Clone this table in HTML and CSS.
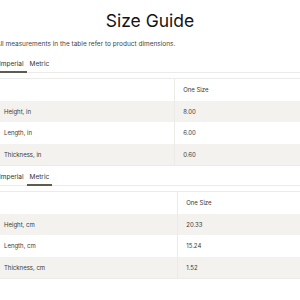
FILE: index.html
```html
<!DOCTYPE html>
<html lang="en">
<head>
<meta charset="utf-8">
<title>Size Guide</title>
<link rel="stylesheet" href="styles.css">
</head>
<body>
<div class="guide">
  <h1 class="title">Size Guide</h1>
  <p class="intro">All measurements in the table refer to product dimensions.</p>

  <section class="unit">
    <div class="tabs">
      <span class="tab is-active">Imperial</span>
      <span class="tab">Metric</span>
    </div>
    <table class="sizes">
      <thead>
        <tr><th class="label"></th><th class="value">One Size</th></tr>
      </thead>
      <tbody>
        <tr><td class="label">Height, in</td><td class="value">8.00</td></tr>
        <tr><td class="label">Length, in</td><td class="value">6.00</td></tr>
        <tr><td class="label">Thickness, in</td><td class="value">0.60</td></tr>
      </tbody>
    </table>
  </section>

  <section class="unit">
    <div class="tabs">
      <span class="tab">Imperial</span>
      <span class="tab is-active">Metric</span>
    </div>
    <table class="sizes">
      <thead>
        <tr><th class="label"></th><th class="value">One Size</th></tr>
      </thead>
      <tbody>
        <tr><td class="label">Height, cm</td><td class="value">20.33</td></tr>
        <tr><td class="label">Length, cm</td><td class="value">15.24</td></tr>
        <tr><td class="label">Thickness, cm</td><td class="value">1.52</td></tr>
      </tbody>
    </table>
  </section>
</div>
</body>
</html>
```

FILE: styles.css
```css
html, body {
  margin: 0;
  padding: 0;
  background: #ffffff;
}

body {
  font-family: "Inter", "Liberation Sans", sans-serif;
  color: #333330;
  overflow: hidden;
}

.guide {
  width: 308px;
  margin-left: -4px;
}

.title {
  margin: 0;
  padding-top: 10px;
  font-size: 17.5px;
  font-weight: 400;
  line-height: 22px;
  text-align: center;
  color: #141414;
}

.intro {
  margin: 7px 0 0;
  font-size: 6.5px;
  line-height: 10px;
  color: #444440;
}

.unit {
  display: flex;
  flex-direction: column;
}

.tabs {
  display: flex;
  margin-top: 10px;
  border-bottom: 1px solid #ecebe7;
}

.tab {
  font-size: 6.5px;
  line-height: 8px;
  padding: 1px 3px 3px;
  border-bottom: 2px solid transparent;
  margin-bottom: -1px;
  color: #333330;
}

.tab.is-active {
  border-bottom-color: #5f5c4c;
}

.sizes {
  width: 100%;
  margin-top: 5px;
  border-collapse: collapse;
  border-top: 1px solid #ecebe7;
  border-bottom: 1px solid #ecebe7;
  font-size: 6px;
}

.sizes th,
.sizes td {
  padding: 0 8px;
  height: 21.5px;
  text-align: left;
  font-weight: 400;
  color: #3a3a36;
}

.sizes .label {
  width: 58%;
  border-right: 1px solid #ecebe7;
}

.sizes tbody tr:nth-child(odd) {
  background: #f3f2ee;
}

.unit + .unit .tabs {
  margin-top: 6px;
}

.unit + .unit .sizes .label {
  width: 59%;
}
```
